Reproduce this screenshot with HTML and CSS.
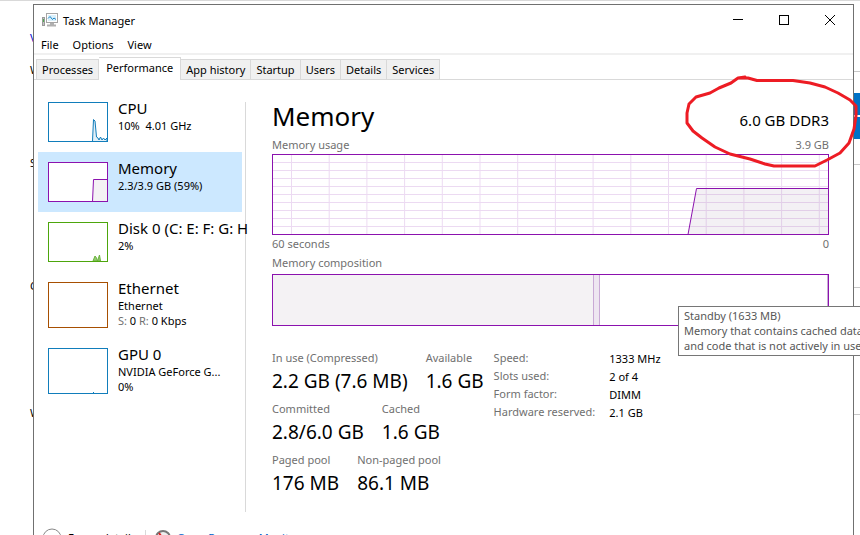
FILE: index.html
```
<!DOCTYPE html>
<html lang="en">
<head>
    <meta charset="UTF-8">
    <meta name="viewport" content="width=device-width, initial-scale=1.0">
    <title>Task Manager</title>
    <link rel="stylesheet" href="styles.css">
</head>
<body>
    <div class="desktop">
        <div class="page-behind" aria-hidden="true">
            <span class="bit bit-1">V</span>
            <span class="bit bit-2">W</span>
            <span class="bit bit-3">S</span>
            <span class="bit bit-4">C</span>
            <span class="bit bit-5">W</span>
            <span class="rule rule-1"></span>
            <span class="rule rule-2"></span>
            <span class="rule rule-3"></span>
            <span class="rule rule-4"></span>
            <span class="blue-button"></span>
        </div>

        <div class="window">
            <header class="titlebar">
                <svg class="app-icon" width="16" height="14" viewBox="0 0 16 14">
                    <rect x="0.5" y="4.5" width="2" height="8" fill="#c4c4c4" stroke="#9a9a9a"/>
                    <rect x="1" y="6" width="1" height="3" fill="#4fae4f"/>
                    <rect x="4.5" y="0.5" width="11" height="9" fill="#fff" stroke="#a5a5a5"/>
                    <rect x="6" y="2" width="8" height="6" fill="#d9f0fb"/>
                    <path d="M6 5.5L8 3.5L10.500 6.500L12 5L14 6.500" fill="none" stroke="#1c84c6"/>
                    <path d="M8 10H12V11.5H14V13.5H5V11.5H8Z" fill="#b0b0b0"/>
                </svg>
                <span class="title">Task Manager</span>
                <div class="controls">
                    <button type="button" aria-label="Minimize"><svg width="10" height="10"><path d="M0 4.5H10" stroke="#000"/></svg></button>
                    <button type="button" aria-label="Maximize"><svg width="10" height="10"><rect x="0.5" y="0.5" width="9" height="9" fill="none" stroke="#000"/></svg></button>
                    <button type="button" aria-label="Close"><svg width="10" height="10"><path d="M0 0L10 10M10 0L0 10" stroke="#000"/></svg></button>
                </div>
            </header>

            <nav class="menubar">
                <button type="button">File</button>
                <button type="button">Options</button>
                <button type="button">View</button>
            </nav>

            <div class="tabs" role="tablist">
                <button type="button" role="tab">Processes</button>
                <button type="button" role="tab" class="active" aria-selected="true">Performance</button>
                <button type="button" role="tab">App history</button>
                <button type="button" role="tab">Startup</button>
                <button type="button" role="tab">Users</button>
                <button type="button" role="tab">Details</button>
                <button type="button" role="tab">Services</button>
            </div>

            <main class="content">
                <aside class="sidebar">
                    <button type="button" class="item">
                        <svg class="mini" viewBox="0 0 60 40">
                            <path d="M44.5 39L45.5 17.5L47 19L48.5 35L50 36L51 38L52.5 35L54 38L55.5 36L57 38L59 36V39.5H44Z" fill="#e3f0f8" stroke="#117dbb"/>
                            <rect x="0.5" y="0.5" width="59" height="39" fill="none" stroke="#117dbb"/>
                        </svg>
                        <span class="text"><span class="name">CPU</span><span>10%&nbsp; 4.01 GHz</span></span>
                    </button>
                    <button type="button" class="item selected">
                        <svg class="mini" viewBox="0 0 60 40">
                            <rect width="60" height="40" fill="#fff"/>
                            <path d="M44.5 39.5L45.5 17.5H59.5V39.5Z" fill="#f4f2f4" stroke="#8b12ae"/>
                            <rect x="0.5" y="0.5" width="59" height="39" fill="none" stroke="#8b12ae"/>
                        </svg>
                        <span class="text"><span class="name">Memory</span><span>2.3/3.9 GB (59%)</span></span>
                    </button>
                    <button type="button" class="item">
                        <svg class="mini" viewBox="0 0 60 40">
                            <path d="M45 39L47 34L48.5 36L49.5 39L51.5 33L52.5 39Z" fill="#94cb72" stroke="#6bb33d"/>
                            <rect x="0.5" y="0.5" width="59" height="39" fill="none" stroke="#4da60c"/>
                        </svg>
                        <span class="text"><span class="name">Disk 0 (C: E: F: G: H</span><span>2%</span></span>
                    </button>
                    <button type="button" class="item tall">
                        <svg class="mini" viewBox="0 0 60 46">
                            <rect x="0.5" y="0.5" width="59" height="45" fill="none" stroke="#a74f01"/>
                        </svg>
                        <span class="text"><span class="name">Ethernet</span><span>Ethernet</span><span><i>S:</i> 0 <i>R:</i> 0 Kbps</span></span>
                    </button>
                    <button type="button" class="item tall">
                        <svg class="mini" viewBox="0 0 60 46">
                            <path d="M45 44.5H46" stroke="#117dbb"/>
                            <rect x="0.5" y="0.5" width="59" height="45" fill="none" stroke="#117dbb"/>
                        </svg>
                        <span class="text"><span class="name">GPU 0</span><span>NVIDIA GeForce G...</span><span>0%</span></span>
                    </button>
                </aside>

                <section class="details">
                    <div class="heading">
                        <h1>Memory</h1>
                        <span class="capacity">6.0 GB DDR3</span>
                    </div>
                    <div class="caption"><span>Memory usage</span><span>3.9 GB</span></div>
                    <svg class="usage" viewBox="0 0 557 81" preserveAspectRatio="none">
                        <defs>
                            <pattern id="grid" x="19" y="0" width="37.7" height="8" patternUnits="userSpaceOnUse">
                                <path d="M0.5 0V8M0 0.5H37.7" stroke="#ecdaf2" fill="none"/>
                            </pattern>
                        </defs>
                        <rect width="557" height="81" fill="url(#grid)"/>
                        <path d="M416 80.5L424.5 34.5H556.5V80.5Z" fill="#8a708f" fill-opacity="0.1" stroke="#8b12ae"/>
                        <rect x="0.5" y="0.5" width="556" height="80" fill="none" stroke="#8b12ae"/>
                    </svg>
                    <div class="caption below"><span>60 seconds</span><span>0</span></div>
                    <div class="caption">Memory composition</div>
                    <div class="composition">
                        <span class="in-use"></span>
                        <span class="modified"></span>
                        <span class="standby"></span>
                        <span class="free"></span>
                    </div>

                    <div class="stats">
                        <div class="counters">
                            <dl><div><dt>In use (Compressed)</dt><dd>2.2 GB (7.6 MB)</dd></div><div><dt>Available</dt><dd>1.6 GB</dd></div></dl>
                            <dl><div><dt>Committed</dt><dd>2.8/6.0 GB</dd></div><div><dt>Cached</dt><dd>1.6 GB</dd></div></dl>
                            <dl><div><dt>Paged pool</dt><dd>176 MB</dd></div><div><dt>Non-paged pool</dt><dd>86.1 MB</dd></div></dl>
                        </div>
                        <table class="hardware">
                            <tr><th scope="row">Speed:</th><td>1333 MHz</td></tr>
                            <tr><th scope="row">Slots used:</th><td>2 of 4</td></tr>
                            <tr><th scope="row">Form factor:</th><td>DIMM</td></tr>
                            <tr><th scope="row">Hardware reserved:</th><td>2.1 GB</td></tr>
                        </table>
                    </div>
                </section>
            </main>

            <footer class="footer">
                <button type="button">
                    <svg width="20" height="20" viewBox="0 0 20 20"><circle cx="10" cy="10" r="9" fill="#fff" stroke="#888"/><path d="M6 12L10 8L14 12" fill="none" stroke="#444"/></svg>
                    Fewer details
                </button>
                <span class="divider"></span>
                <a href="#">
                    <svg width="16" height="18" viewBox="0 0 16 18"><circle cx="8" cy="9" r="7" fill="#eee" stroke="#777" stroke-width="2"/><path d="M4 4L10 13" stroke="#d22" stroke-width="2"/></svg>
                    Open Resource Monitor
                </a>
            </footer>
        </div>

        <div class="tooltip" role="tooltip">
            Standby (1633 MB)<br>
            Memory that contains cached data<br>
            and code that is not actively in use
        </div>

        <svg class="scribble" width="180" height="100" viewBox="680 70 180 100">
            <path d="M745 77L738 78L731 83L719 88L710 93L696 97L689 104L687 113L687 123L693 131L702 138L715 147L730 154L750 159L765 164L774 166H815L827 160L840 153L849 143L854 129L856 116L856 106L850 100L838 93L825 87L810 83L793 80.5H757L748 78H740" fill="none" stroke="#ed1c24" stroke-width="3" stroke-linejoin="round" stroke-linecap="round"/>
        </svg>
    </div>
</body>
</html>
```
FILE: styles.css
```
* {
    margin: 0;
    padding: 0;
    box-sizing: border-box;
}

body {
    font-family: "Noto Sans", "Open Sans", sans-serif;
    font-size: 11px;
    line-height: 15px;
    color: #000;
    background: #fff;
    overflow: hidden;
}

button {
    font: inherit;
    color: inherit;
    background: none;
    border: none;
    text-align: left;
}

.desktop {
    position: relative;
    height: 100vh;
    overflow: hidden;
    border-top: 1px solid #d9d9d9;
    padding: 3px 6px 0 33px;
}

/* page showing behind the window */
.bit {
    position: absolute;
    left: 30px;
}

.bit-1 { top: 29px; color: #00c; }
.bit-2 { top: 61px; }
.bit-3 { top: 154px; }
.bit-4 { top: 277px; }
.bit-5 { top: 404px; }

.rule {
    position: absolute;
    right: 0;
    width: 6px;
    height: 1px;
    background: #c8c8c8;
}

.rule-1 { top: 70px; }
.rule-2 { top: 163px; }
.rule-3 { top: 286px; }
.rule-4 { top: 413px; }

.blue-button {
    position: absolute;
    top: 92px;
    right: 0;
    width: 6px;
    height: 46px;
    background: linear-gradient(#0072c6 22px, #fff 22px, #fff 24px, #0072c6 24px);
}

.window {
    position: relative;
    display: flex;
    flex-direction: column;
    min-height: 560px;
    background: #fff;
    border: 1px solid #707070;
}

.titlebar {
    display: flex;
    align-items: center;
    height: 30px;
    padding-left: 8px;
}

.title {
    margin-left: 5px;
}

.controls {
    display: flex;
    margin-left: auto;
}

.controls button {
    display: flex;
    align-items: center;
    justify-content: center;
    width: 46px;
    height: 28px;
}

.menubar {
    display: flex;
    gap: 14px;
    height: 20px;
    padding-left: 7px;
    border-bottom: 2px solid #f0f0f0;
}

.tabs {
    display: flex;
    align-items: flex-end;
    height: 25px;
    padding-left: 2px;
    border-bottom: 1px solid #d9d9d9;
}

.tabs button {
    height: 20px;
    padding: 0 5px;
    background: #f0f0f0;
    border: 1px solid #d9d9d9;
    border-left: none;
    border-bottom: none;
}

.tabs button:first-child {
    border-left: 1px solid #d9d9d9;
}

.tabs .active {
    height: 23px;
    margin-bottom: -1px;
    padding: 0 7px 3px;
    background: #fff;
}

.content {
    display: flex;
    padding: 22px 24px 0 4px;
}

.sidebar {
    width: 208px;
    height: 410px;
    flex-shrink: 0;
    border-right: 1px solid #d9d9d9;
}

.item {
    display: flex;
    gap: 10px;
    width: 204px;
    height: 60px;
    padding: 10px 0 0 10px;
    white-space: nowrap;
}

.item:first-child {
    margin-top: -10px;
}

.item.tall {
    height: 66px;
}

.item.selected {
    background: #cce8ff;
}

.mini {
    width: 60px;
    height: 40px;
    flex-shrink: 0;
}

.tall .mini {
    height: 46px;
}

.item .text {
    display: flex;
    flex-direction: column;
}

.item .name {
    margin-bottom: 3px;
    font-size: 15px;
    line-height: 13px;
}

.item i {
    font-style: normal;
    color: #707070;
}

.details {
    flex: 1;
    margin-left: 26px;
}

.heading {
    display: flex;
    justify-content: space-between;
    align-items: baseline;
    margin-bottom: 6px;
}

h1 {
    font-size: 26px;
    font-weight: 400;
    line-height: 28px;
}

.capacity {
    font-size: 15px;
}

.caption {
    display: flex;
    justify-content: space-between;
    line-height: 18px;
    color: #707070;
}

.caption.below {
    margin-bottom: 1px;
}

.usage {
    display: block;
    width: 100%;
    height: 81px;
}

.composition {
    display: flex;
    height: 52px;
    margin-top: 2px;
    border: 1px solid #8b12ae;
}

.in-use {
    flex: 320;
    background: #f4f2f4;
}

.modified {
    flex: 5;
    background: #eee6f1;
    border: solid #c9a9d5;
    border-width: 0 1px;
}

.standby {
    flex: 227;
}

.free {
    width: 1px;
    background: #c9a9d5;
}

.stats {
    display: flex;
    gap: 10px;
    margin-top: 23px;
}

.counters dl {
    display: flex;
    gap: 18px;
    margin-bottom: 5px;
    white-space: nowrap;
}

dt,
.hardware th {
    line-height: 18px;
    color: #707070;
    font-weight: 400;
    text-align: left;
}

dd {
    font-size: 19px;
    line-height: 28px;
}

.hardware {
    border-collapse: collapse;
    align-self: flex-start;
}

.hardware td,
.hardware th {
    height: 18px;
    white-space: nowrap;
}

.hardware td {
    padding-left: 14px;
}

.footer {
    display: flex;
    gap: 9px;
    padding: 16px 0 0 8px;
}

.footer button,
.footer a {
    display: flex;
    gap: 6px;
    align-items: center;
    line-height: 12px;
}

.footer a {
    color: #0066cc;
    text-decoration: none;
}

.divider {
    margin-top: 2px;
    border-left: 1px solid #d9d9d9;
}

.tooltip {
    position: absolute;
    left: 678px;
    top: 305px;
    padding: 1px 5px 2px;
    color: #575757;
    background: #fff;
    border: 1px solid #767676;
    white-space: nowrap;
}

.scribble {
    position: absolute;
    top: 69px;
    left: 680px;
}
```
